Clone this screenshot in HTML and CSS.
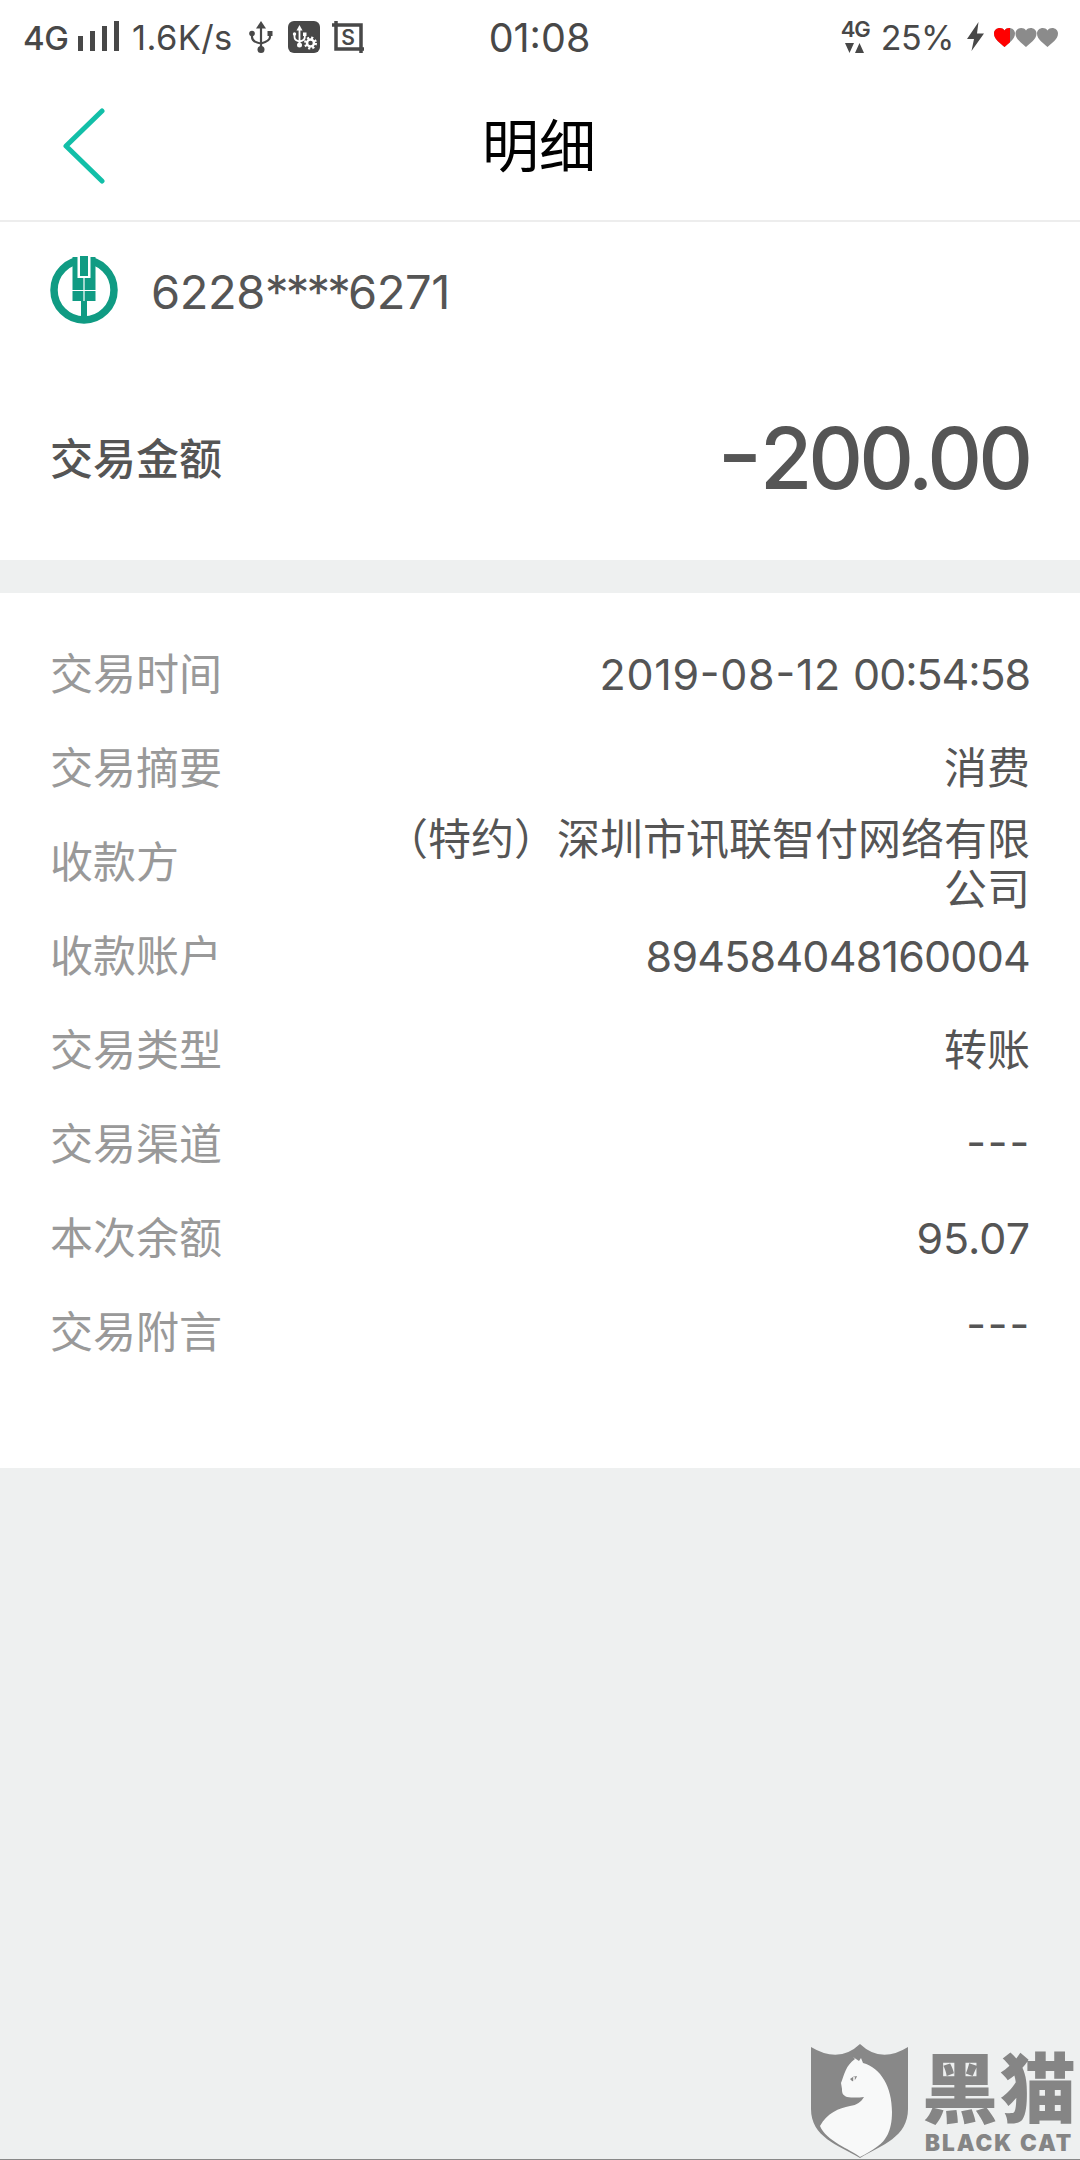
FILE: index.html
```
<!DOCTYPE html>
<html lang="zh-CN">
<head>
    <meta charset="UTF-8">
    <meta name="viewport" content="width=device-width, initial-scale=1.0">
    <title>明细</title>
    <link rel="stylesheet" href="styles.css">
</head>
<body>
    <div class="status-bar">
        <div class="status-left">
            <span class="net">4G</span>
            <svg class="signal" width="42" height="30" viewBox="0 0 42 30">
                <path d="M0 15h5v15H0zM12 10h5v20h-5zM24 5h5v25h-5zM36 0h5v30h-5z"/>
            </svg>
            <span class="speed">1.6K/s</span>
            <svg class="usb" width="24" height="32" viewBox="0 0 24 32">
                <path d="M12 0l5 7.500H7z"/>
                <circle cx="12" cy="28.500" r="3.500"/>
                <circle cx="3" cy="12.500" r="2.800"/>
                <path d="M18.500 10h5v5h-5z"/>
                <path class="wire" d="M12 6v20M3 13v3q0 5 9 6.500M21 13v3q0 4-9 6.500"/>
            </svg>
            <svg class="usb-set" width="32" height="32" viewBox="0 0 32 32">
                <rect width="32" height="32" rx="6"/>
                <g class="light">
                    <path d="M11.500 4l3 5.500h-6z"/>
                    <circle cx="11.500" cy="24" r="2.500"/>
                    <circle cx="6.500" cy="13" r="1.700"/>
                    <path d="M15 11.500h3.500V15H15z"/>
                    <path class="line" d="M11.500 8v16M6.500 13v3q0 3.500 5 4.500M16.800 13v3q0 3.500-5 4.500"/>
                    <circle class="teeth" cx="22.500" cy="22" r="5"/>
                    <circle class="gear" cx="22.500" cy="22" r="3.500"/>
                </g>
            </svg>
            <svg class="shot" width="32" height="32" viewBox="0 0 32 32">
                <path class="frame" d="M0 4h29v28M4 0v28h28"/>
                <text x="16" y="23.500">S</text>
            </svg>
        </div>
        <div class="clock">01:08</div>
        <div class="status-right">
            <div class="data">
                <span>4G</span>
                <svg width="19" height="10" viewBox="0 0 19 10"><path d="M0 0h9L4.500 10zM10 10h9L14.500 0z"/></svg>
            </div>
            <span class="percent">25%</span>
            <svg class="bolt" width="17" height="29" viewBox="0 0 17 29"><path d="M11.500 0L0 17h7L4.500 29 17 11.500h-7z"/></svg>
            <svg class="hearts" width="64" height="19" viewBox="0 0 64 19">
                <defs>
                    <path id="heart" d="M10.500 19C7 15.500 0 11.500 0 5.500 0 0 7.500-2 10.500 2.500 13.500-2 21 0 21 5.500 21 11.500 14 15.500 10.500 19z"/>
                    <clipPath id="level"><rect width="16" height="19"/></clipPath>
                </defs>
                <use href="#heart"/>
                <use href="#heart" class="full" clip-path="url(#level)"/>
                <use href="#heart" x="21.500"/>
                <use href="#heart" x="43"/>
            </svg>
        </div>
    </div>

    <div class="nav">
        <svg class="back" width="42" height="76" viewBox="0 0 42 76"><path d="M39 3L3 38l36 35"/></svg>
        <h1>明细</h1>
    </div>

    <div class="summary">
        <div class="card">
            <svg width="68" height="68" viewBox="0 0 68 68">
                <circle class="ring" cx="34" cy="34" r="30"/>
                <path class="gap" d="M26 0h16v16H26z"/>
                <path class="wheat" d="M22.500 1h5v21h13V1h5v44H37v19h-6V45h-8.500z"/>
                <path class="wheat" d="M30 0h8v20h-8z"/>
                <path class="cut" d="M34 22v23M22 34.500h24"/>
            </svg>
            <span>6228<span class="stars">****</span>6271</span>
        </div>
        <div class="total">
            <span class="total-label">交易金额</span>
            <span class="amount"><span class="minus">-</span>200.00</span>
        </div>
    </div>

    <div class="detail">
        <div class="row"><span class="label">交易时间</span><span class="value"><span class="date">2019-08-12</span> <span class="time">00:54:58</span></span></div>
        <div class="row"><span class="label">交易摘要</span><span class="value">消费</span></div>
        <div class="row"><span class="label">收款方</span><span class="value payee">（特约）深圳市讯联智付网络有限公司</span></div>
        <div class="row"><span class="label">收款账户</span><span class="value account">894584048160004</span></div>
        <div class="row"><span class="label">交易类型</span><span class="value">转账</span></div>
        <div class="row"><span class="label">交易渠道</span><span class="value dash">---</span></div>
        <div class="row"><span class="label">本次余额</span><span class="value">95.07</span></div>
        <div class="row last"><span class="label">交易附言</span><span class="value dash">---</span></div>
    </div>

    <div class="watermark">
        <svg width="100" height="115" viewBox="0 0 100 115">
            <path class="shield" d="M1 3Q29 20 50 0q21 20 48 3v62c0 28-26 36-48 49C28 101 1 93 1 65z"/>
            <path class="cat" d="M43 13l6 4 2-3 2 5c18 5 29 24 29 49 0 20-7 29-14 34-7 5-12 8-18 11-10-8-34-16-40-31 7-13 19-18 30-20 7-1 11-4 14-9q-9 1-17 0c-5-2-5-5-5-8l-1-6c3-8 5-18 14-24z"/>
            <path class="eye" d="M40 35q3-3 7-3-2 6-5 5z"/>
            <path class="pupil" d="M44 33v4"/>
        </svg>
        <div class="brand">
            <span class="brand-cn">黑猫</span>
            <span class="brand-en">BLACK CAT</span>
        </div>
    </div>
</body>
</html>
```
FILE: styles.css
```
* { box-sizing: border-box; }
body { margin: 0; height: 2160px; background-color: #eef0f0; color: #555; font-family: Inter, "Noto Sans CJK SC", sans-serif; position: relative; overflow: hidden; border-bottom: 1px solid #888; }
svg { display: block; flex: none; }

.status-bar { height: 76px; background: #fff; color: #484848; fill: #484848; display: grid; grid-template-columns: 1fr auto 1fr; align-items: center; padding: 0 22px 0 23px; line-height: 40px; }
.status-left, .status-right { display: flex; align-items: center; }
.status-right { justify-content: flex-end; }
.net { font-size: 33px; font-weight: 500; letter-spacing: -0.5px; width: 43px; }
.signal { margin: 0 12px; margin-top: -4px; }
.speed { font-size: 34.5px; letter-spacing: 0.4px; width: 102px; white-space: nowrap; }
.usb { margin-left: 15px; margin-top: -2px; }
.wire { fill: none; stroke: #484848; stroke-width: 2.2; }
.usb-set { margin-left: 15px; margin-top: -2px; }
.light { fill: #fff; }
.line { fill: none; stroke: #fff; stroke-width: 1.8; }
.teeth { fill: none; stroke: #fff; stroke-width: 3; stroke-dasharray: 2 1.927; }
.gear { fill: none; stroke: #fff; stroke-width: 2.5; }
.shot { margin-left: 12px; margin-top: -3px; }
.frame { fill: none; stroke: #484848; stroke-width: 3.5; }
.shot text { font-size: 21px; font-weight: 600; text-anchor: middle; }
.clock { font-size: 39.5px; margin-right: 2px; }
.data { width: 28px; font-size: 22px; font-weight: 600; line-height: 22px; letter-spacing: -1px; margin-top: -5px; }
.data svg { margin: 3px 0 0 4px; }
.percent { font-size: 34px; margin-left: 12px; letter-spacing: -0.5px; }
.bolt { margin-left: 13px; margin-top: -3px; }
.hearts { margin-left: 10px; margin-top: -2px; fill: #8b8b8b; }
.full { fill: #f00; }

.nav { height: 146px; background: #fff; border-bottom: 2px solid #ededed; display: grid; grid-template-columns: 1fr auto 1fr; align-items: center; padding: 0 63px 4px; }
.back { fill: none; stroke: #12bfa8; stroke-width: 5; stroke-linecap: round; stroke-linejoin: round; }
h1 { margin: 2px 2px 0 0; color: #000; font-size: 57px; font-weight: 400; line-height: 80px; }

.summary { height: 338px; background: #fff; padding: 34px 50px 0; }
.card { display: flex; align-items: center; gap: 33px; height: 68px; font-size: 47px; letter-spacing: -0.4px; }
.card > span { padding-top: 2px; }
.stars { letter-spacing: -2.8px; }
.ring { fill: none; stroke: #109b83; stroke-width: 7.5; }
.gap { fill: #fff; }
.wheat { fill: #109b83; }
.cut { fill: none; stroke: #fff; stroke-width: 1.2; }
.total { display: flex; align-items: center; justify-content: space-between; height: 110px; margin-top: 79px; }
.total-label { font-size: 43px; font-weight: 500; margin-top: -4px; }
.amount { font-size: 85px; font-weight: 500; letter-spacing: -4px; margin-right: 1px; font-feature-settings: "case"; }
.minus { display: inline-block; transform: scaleX(1.15); margin-right: 5px; }

.detail { height: 875px; margin-top: 33px; background: #fff; padding: 34px 50px 0; font-size: 43px; line-height: 50px; }
.row { height: 94px; display: flex; align-items: center; justify-content: space-between; }
.label { color: #999; }
.value { width: 650px; text-align: right; font-feature-settings: "case"; }
.date { letter-spacing: 0.7px; }
.time { letter-spacing: -1.1px; }
.account { letter-spacing: -0.8px; }
.payee { padding-top: 4px; }
.dash { letter-spacing: 1.8px; margin-right: -1px; }
.last .value { margin-top: -12px; }

/* logo over the page corner */
.watermark { position: absolute; right: 0; bottom: 0; width: 270px; height: 115px; display: flex; }
.shield, .eye { fill: #888; }
.cat { fill: #f8f9f9; }
.pupil { stroke: #fff; stroke-width: 1.5; }
.brand { display: flex; flex-direction: column; padding: 1px 0 0 12px; color: #858585; white-space: nowrap; }
.brand-cn { font-family: "Noto Sans CJK SC", sans-serif; font-size: 76px; font-weight: 900; line-height: 78px; letter-spacing: 2px; }
.brand-en { font-size: 22.5px; font-weight: 900; line-height: 28px; letter-spacing: 2px; padding-left: 3px; margin-top: 6px; }
```
